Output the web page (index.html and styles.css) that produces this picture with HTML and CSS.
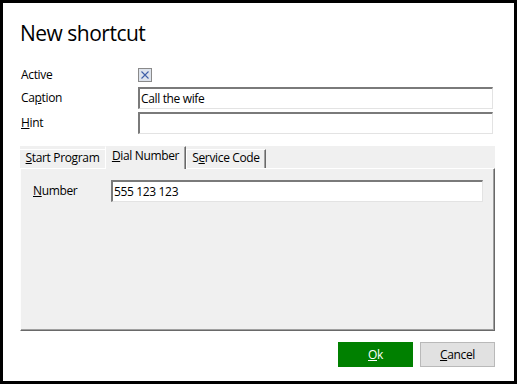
FILE: index.html
```html
<!DOCTYPE html>
<html lang="en">
<head>
    <meta charset="UTF-8">
    <title>New shortcut</title>
    <link rel="stylesheet" href="styles.css">
</head>
<body>
    <div class="dialog">
        <h1 class="title">New shortcut</h1>

        <div class="fields">
            <label class="lbl lbl-top">Active</label>
            <span class="check">
                <svg width="14" height="14" viewBox="0 0 14 14">
                    <rect x="0.5" y="0.5" width="13" height="13" fill="#dde3ec" stroke="#8a8a8a"/>
                    <path d="M3.5 3.5L10.5 10.5M10.5 3.5L3.5 10.5" stroke="#3f5fa8" stroke-width="1.1"/>
                </svg>
            </span>
            <label class="lbl">Ca<u>p</u>tion</label>
            <input class="edit" type="text" value="Call the wife">
            <label class="lbl"><u>H</u>int</label>
            <input class="edit" type="text" value="">
        </div>

        <div class="tabs">
            <div class="tab-strip">
                <div class="tab tab-start"><u>S</u>tart Program</div>
                <div class="tab tab-dial active"><u>D</u>ial Number</div>
                <div class="tab tab-service">S<u>e</u>rvice Code</div>
            </div>
            <div class="tab-body">
                <div class="row">
                    <label class="lbl num-lbl"><u>N</u>umber</label>
                    <input class="edit num-edit" type="text" value="555 123 123">
                </div>
            </div>
        </div>

        <div class="buttons">
            <button class="btn btn-ok"><u>O</u>k</button>
            <button class="btn btn-cancel"><u>C</u>ancel</button>
        </div>
    </div>
</body>
</html>
```

FILE: styles.css
```css
body{
    margin: 0;
    background: #fff;
}
.dialog{
    width: 517px;
    height: 384px;
    box-sizing: border-box;
    border: 3px solid #000;
    background: #fff;
    padding: 17px 19px 0 17px;
    font-family: "Open Sans", "Noto Sans", sans-serif;
    font-size: 12px;
    letter-spacing: -0.35px;
    color: #000;
}
.title{
    margin: 0;
    font-size: 21px;
    font-weight: 400;
    line-height: 27px;
    letter-spacing: -0.5px;
}

/* top fields */
.fields{
    display: grid;
    grid-template-columns: 118px 355px;
    grid-template-rows: 16px 22px 22px;
    row-gap: 3px;
    align-items: center;
    margin-top: 21px;
}
.lbl{
    line-height: 16px;
    padding-left: 1px;
}
.lbl-top{
    align-self: start;
    line-height: 14px;
}
.check{
    align-self: start;
    width: 14px;
    height: 14px;
}
.check svg{ display: block; }
.edit{
    box-sizing: border-box;
    height: 22px;
    margin: 0;
    padding: 0 1px;
    border-style: solid;
    border-width: 2px 1px 1px 2px;
    border-color: #7a7a7a #e3e3e3 #e3e3e3 #7a7a7a;
    background: #fff;
    font-family: inherit;
    font-size: 12px;
    letter-spacing: -0.35px;
    color: #000;
    outline: none;
}

/* tabs */
.tabs{
    margin-top: 12px;
}
.tab-strip{
    display: flex;
    align-items: flex-start;
    height: 22px;
    background: #f0f0f0;
}
.tab{
    box-sizing: border-box;
    margin-top: 3px;
    height: 19px;
    line-height: 16px;
    text-align: center;
    border-top: 1px solid #fff;
    border-left: 1px solid #fff;
    border-right: 1px solid #696969;
    background: #f0f0f0;
}
.tab-start{ width: 85px; border-right: none; border-left: none; }
.tab-dial{ width: 81px; }
.tab-service{ width: 80px; box-shadow: inset -1px 0 #a0a0a0; }
.tab.active{
    position: relative;
    z-index: 1;
    margin-top: 0;
    height: 23px;
    padding-top: 1px;
    border-top-color: #f0f0f0;
    box-shadow: inset -1px 0 #a0a0a0;
}
.tab-body{
    box-sizing: border-box;
    height: 163px;
    padding: 11px 10px 0 12px;
    background: #f0f0f0;
    border-top: 1px solid #fff;
    border-left: 1px solid #fdfdfd;
    border-right: 1px solid #696969;
    border-bottom: 1px solid #696969;
    box-shadow: inset -1px -1px 0 #a0a0a0;
}
.row{
    display: flex;
    align-items: center;
}
.num-lbl{
    width: 78px;
    padding-left: 0;
}
.num-edit{
    width: 372px;
}

/* buttons */
.buttons{
    display: flex;
    justify-content: flex-end;
    gap: 7px;
    margin-top: 11px;
}
.btn{
    width: 75px;
    height: 25px;
    margin: 0;
    padding: 0;
    font-family: inherit;
    font-size: 12px;
    letter-spacing: -0.35px;
    cursor: pointer;
}
.btn-ok{
    background: #008000;
    border: 1px solid #008000;
    color: #fff;
}
.btn-cancel{
    background: #e1e1e1;
    border: 1px solid #b9b9b9;
    color: #000;
}
```
